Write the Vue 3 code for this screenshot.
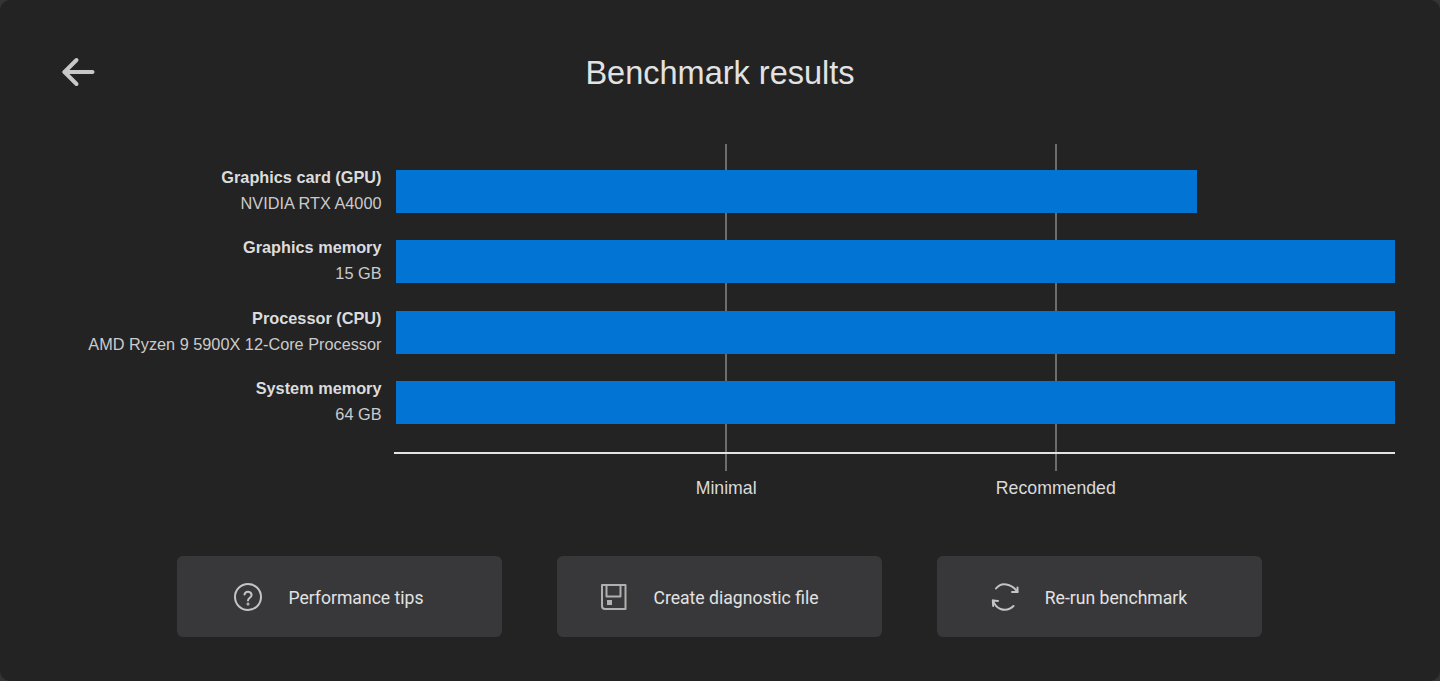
<script setup>
const rows = [
  { name: 'Graphics card (GPU)', value: 'NVIDIA RTX A4000', pct: 80.2 },
  { name: 'Graphics memory', value: '15 GB', pct: 100 },
  { name: 'Processor (CPU)', value: 'AMD Ryzen 9 5900X 12-Core Processor', pct: 100 },
  { name: 'System memory', value: '64 GB', pct: 100 },
]
const ticks = [
  { label: 'Minimal', pos: 33.05 },
  { label: 'Recommended', pos: 66.05 },
]
</script>

<template>
  <main class="page">
    <header class="head">
      <button class="back" aria-label="Back">
        <svg width="36" height="30" viewBox="0 0 36 30" fill="none" stroke="#c8c8c8" stroke-width="4" stroke-linecap="round" stroke-linejoin="round">
          <path d="M4.500 15H32.500" />
          <path d="M16.500 3 4.500 15 16.500 27" />
        </svg>
      </button>
      <h1 class="title">Benchmark results</h1>
    </header>

    <section class="chart">
      <div class="labels">
        <div v-for="r in rows" :key="r.name" class="label">
          <strong class="label-name">{{ r.name }}</strong>
          <span class="label-value">{{ r.value }}</span>
        </div>
      </div>
      <div class="plot">
        <div v-for="t in ticks" :key="t.label" class="tick" :style="{ left: t.pos + '%' }">
          <span class="tick-label">{{ t.label }}</span>
        </div>
        <div class="bars">
          <div class="track" v-for="r in rows" :key="r.name">
            <div class="bar" :style="{ width: r.pct + '%' }"></div>
          </div>
        </div>
        <div class="axis"></div>
      </div>
    </section>

    <footer class="actions">
      <button class="action">
        <svg class="icon" viewBox="0 0 28 28" fill="none" stroke="#c4c4c4" stroke-width="2" stroke-linecap="round" stroke-linejoin="round">
          <circle cx="14" cy="14" r="13" />
          <path d="M10.500 11.500a3.600 3.600 0 0 1 7.100 .6c0 2.600-3.600 2.800-3.600 5.300" />
          <circle cx="14" cy="21" r=".5" fill="#c4c4c4" />
        </svg>
        <span class="action-text">Performance tips</span>
      </button>
      <button class="action">
        <svg class="icon" viewBox="0 0 28 28" fill="none" stroke="#b0b0b0" stroke-width="2" stroke-linejoin="round">
          <path d="M3 2H26.500V26H6a3 3 0 0 1-3-3Z" />
          <path d="M7.500 2V13.500H21.500V2" />
          <rect x="8" y="17" width="5" height="5" fill="#b0b0b0" stroke="none" />
        </svg>
        <span class="action-text">Create diagnostic file</span>
      </button>
      <button class="action">
        <svg class="icon" viewBox="0 0 28 28" fill="none" stroke="#c4c4c4" stroke-width="2" stroke-linecap="round" stroke-linejoin="round">
          <path d="M5 5.500C8 1.500 13 .500 17.500 2c3.500 1.200 7 3.800 9 7" />
          <path d="M26.500 4.500V9H21" />
          <path d="M22.500 23C19 26.500 14 27.500 9.500 26 6 24.800 3.500 21.500 2 17.500" />
          <path d="M7 18 1.800 17.500 2.200 23" />
        </svg>
        <span class="action-text">Re-run benchmark</span>
      </button>
    </footer>
  </main>
</template>

<style scoped>
.page {
  box-sizing: border-box;
  height: 681px;
  display: flex;
  flex-direction: column;
  background: #232324;
  border-radius: 10px;
  font-family: "Liberation Sans", Arial, sans-serif;
  color: #e2e2e2;
  overflow: hidden;
}
.head {
  height: 144px;
  box-sizing: border-box;
  padding-top: 50px;
  position: relative;
  text-align: center;
}
.back {
  position: absolute;
  left: 60px;
  top: 57px;
  padding: 0;
  border: 0;
  background: none;
  display: flex;
}
.title {
  margin: 0;
  font-size: 32.500px;
  line-height: 46px;
  font-weight: 400;
  color: #e2e2e2;
}
.chart {
  display: flex;
  padding-right: 45px;
}
.labels {
  width: 381.500px;
  margin-right: 14.500px;
  padding-top: 21px;
  display: flex;
  flex-direction: column;
  gap: 19.400px;
  text-align: right;
}
.label {
  height: 51px;
  display: flex;
  flex-direction: column;
  justify-content: space-between;
  font-size: 16.300px;
  line-height: 25px;
}
.label-name {
  font-weight: 700;
  color: #dcdcdc;
}
.label-value {
  color: #cbcbcb;
}
.plot {
  flex: 1;
  position: relative;
  height: 327px;
  padding-top: 26px;
  box-sizing: border-box;
}
.bars {
  position: relative;
  display: flex;
  flex-direction: column;
  gap: 27.250px;
}
.track {
  height: 43px;
}
.bar {
  height: 100%;
  background: #0275d4;
}
.tick {
  position: absolute;
  top: 0;
  bottom: 0;
  width: 2px;
  margin-left: -1px;
  background: #6d6d6d;
}
.tick-label {
  position: absolute;
  top: 333px;
  left: 1px;
  transform: translateX(-50%);
  font-size: 17.700px;
  line-height: 22px;
  white-space: nowrap;
  color: #dadada;
}
.axis {
  position: relative;
  height: 2px;
  margin: 28.250px 0 0 -2px;
  background: #e4e4e4;
}
.actions {
  display: flex;
  justify-content: center;
  gap: 55px;
  margin-top: 85px;
  padding-right: 1px;
}
.action {
  width: 325px;
  height: 81px;
  box-sizing: border-box;
  padding: 0 21px 0 0;
  border: 0;
  border-radius: 6px;
  background: #38383a;
  display: flex;
  align-items: center;
  justify-content: center;
  gap: 26px;
  font-family: Roboto, sans-serif;
  font-size: 17.600px;
  color: #e2e2e2;
}
.action-text {
  padding-top: 2px;
}
.icon {
  width: 28px;
  height: 28px;
  flex: none;
}
</style>

<style>
html, body {
  background: #343434;
}
</style>
